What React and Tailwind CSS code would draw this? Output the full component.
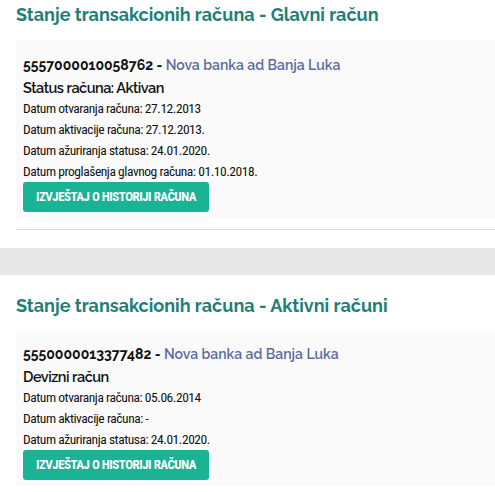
const heading = "font-['Raleway','Lato',sans-serif] text-[18px] leading-[24px] font-bold text-[#1d7f7a]";
const dateLine = "font-['Roboto_Condensed','Roboto',sans-serif] text-[13.5px] leading-[21px] tracking-[-0.45px] text-[#111]";

const Account = ({ number, title, dates }) => (
  <div className="bg-[#fafafa] pl-[7px] pt-[15px] pb-[6px]">
    <div className="font-['Raleway','Lato',sans-serif] text-[14px] leading-[20px] font-bold text-[#111]">
      {number} - <span className="font-semibold text-[#5a6b9e]">Nova banka ad Banja Luka</span>
    </div>
    <div className="font-['Raleway','Lato',sans-serif] text-[14.5px] leading-[20px] font-semibold tracking-[-0.5px] text-[#111] mt-[3px]">
      {title}
    </div>
    {dates.map((d) => (
      <div key={d} className={dateLine}>{d}</div>
    ))}
    <button className="w-[186px] h-[30px] rounded-[3px] bg-[#1ab394] text-white font-['Roboto_Condensed','Roboto',sans-serif] font-bold text-[13px] tracking-[-0.5px]">
      IZVJEŠTAJ O HISTORIJI RAČUNA
    </button>
  </div>
);

export default function App() {
  return (
    <div className="w-[495px] h-[492px] overflow-hidden bg-white">
      <div className="pl-[16px] pt-[3px]">
        <h2 className={heading}>Stanje transakcionih računa - Glavni račun</h2>
        <div className="mt-[13px] pb-[11px] border-b border-[#dddddd]">
          <Account
            number="5557000010058762"
            title="Status računa: Aktivan"
            dates={[
              'Datum otvaranja računa: 27.12.2013',
              'Datum aktivacije računa: 27.12.2013.',
              'Datum ažuriranja statusa: 24.01.2020.',
              'Datum proglašenja glavnog računa: 01.10.2018.',
            ]}
          />
        </div>
      </div>
      <div className="mt-[18px] h-[27px] bg-[#e8e8e8]" />
      <div className="pl-[16px] pt-[19px]">
        <h2 className={heading}>Stanje transakcionih računa - Aktivni računi</h2>
        <div className="mt-[11px]">
          <Account
            number="5550000013377482"
            title="Devizni račun"
            dates={[
              'Datum otvaranja računa: 05.06.2014',
              'Datum aktivacije računa: -',
              'Datum ažuriranja statusa: 24.01.2020.',
            ]}
          />
        </div>
      </div>
    </div>
  );
}
